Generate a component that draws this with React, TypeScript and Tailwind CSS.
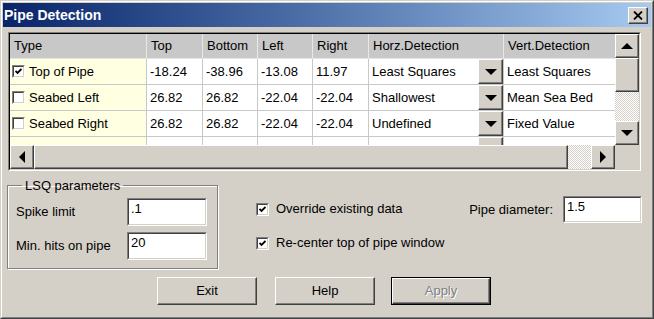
import React from 'react';

const raised =
  'border border-t-white border-l-white border-r-[#404040] border-b-[#404040] shadow-[inset_-1px_-1px_0_#808080,inset_1px_1px_0_#d4d0c8]';
const dither =
  'bg-[image:repeating-conic-gradient(#d4d0c8_0%_25%,#ffffff_0%_50%)] bg-[length:2px_2px]';

const rows = [
  { checked: true, type: 'Top of Pipe', top: '-18.24', bottom: '-38.96', left: '-13.08', right: '11.97', horz: 'Least Squares', vert: 'Least Squares' },
  { checked: false, type: 'Seabed Left', top: '26.82', bottom: '26.82', left: '-22.04', right: '-22.04', horz: 'Shallowest', vert: 'Mean Sea Bed' },
  { checked: false, type: 'Seabed Right', top: '26.82', bottom: '26.82', left: '-22.04', right: '-22.04', horz: 'Undefined', vert: 'Fixed Value' },
  { checked: false, type: '', top: '', bottom: '', left: '', right: '', horz: '', vert: '' },
];

const Arrow: React.FC<{ dir: 'up' | 'down' | 'left' | 'right' }> = ({ dir }) => {
  const pts = {
    up: '0,6 6,0 12,6',
    down: '0,0 12,0 6,6',
    left: '6,0 6,12 0,6',
    right: '0,0 0,12 6,6',
  }[dir];
  const vertical = dir === 'up' || dir === 'down';
  return (
    <svg width={vertical ? 12 : 6} height={vertical ? 6 : 12} viewBox={vertical ? '0 0 12 6' : '0 0 6 12'}>
      <polygon points={pts} fill="black" />
    </svg>
  );
};

const CheckBox: React.FC<{ checked: boolean }> = ({ checked }) => (
  <div className="w-[13px] h-[13px] shrink-0 border border-t-[#808080] border-l-[#808080] border-r-white border-b-white">
    <div className="w-full h-full bg-white border border-t-[#404040] border-l-[#404040] border-r-[#d4d0c8] border-b-[#d4d0c8] flex items-center justify-center">
      {checked && (
        <svg width="7" height="7" viewBox="0 0 7 7">
          <polyline points="0.5,3 2.5,5 6.5,1" fill="none" stroke="black" strokeWidth="1.8" />
        </svg>
      )}
    </div>
  </div>
);

const Sunken: React.FC<{ className: string; children?: React.ReactNode }> = ({ className, children }) => (
  <div className={`border border-t-[#808080] border-l-[#808080] border-r-white border-b-white ${className}`}>
    <div className="w-full h-full bg-white border border-t-[#404040] border-l-[#404040] border-r-[#d4d0c8] border-b-[#d4d0c8] px-[2px] pt-[1px] text-[13px] leading-[16px]">
      {children}
    </div>
  </div>
);

const headers = ['Type', 'Top', 'Bottom', 'Left', 'Right', 'Horz.Detection', 'Vert.Detection'];
const widths = ['w-[137px]', 'w-[56px]', 'w-[55px]', 'w-[55px]', 'w-[56px]', 'w-[135px]', 'w-[111px]'];

const Button: React.FC<{ label: string; className?: string; disabled?: boolean; def?: boolean }> = ({ label, className = '', disabled, def }) => (
  <div className={`w-[100px] h-[28px] ${def ? 'border border-black' : ''} ${className}`}>
    <div className={`w-full h-full ${raised} flex items-center justify-center text-[13px] ${disabled ? 'text-[#808080] [text-shadow:1px_1px_0_#fff]' : 'text-black'}`}>
      {label}
    </div>
  </div>
);

export default function App() {
  return (
    <div className="w-[654px] h-[319px] bg-[#d4d0c8] border border-t-[#d4d0c8] border-l-[#d4d0c8] border-r-[#404040] border-b-[#404040] font-['Liberation_Sans',Arial,sans-serif] text-black">
      <div className="w-full h-full border border-t-white border-l-white border-r-[#808080] border-b-[#808080] p-px flex flex-col">
        {/* title bar */}
        <div className="h-[24px] shrink-0 bg-gradient-to-r from-[#0a246a] to-[#a6caf0] flex items-center justify-between pl-[1px] pr-[3px]">
          <span className="text-white font-bold text-[14px] leading-none">Pipe Detection</span>
          <div className={`w-[20px] h-[17px] bg-[#d4d0c8] ${raised} flex items-center justify-center`}>
            <svg width="10" height="9" viewBox="0 0 10 9">
              <path d="M1 0.5 L9 8.5 M9 0.5 L1 8.5" stroke="black" strokeWidth="1.8" />
            </svg>
          </div>
        </div>

        {/* grid */}
        <div className="ml-[5px] mt-[5px] w-[633px] h-[139px] shrink-0 border border-t-[#808080] border-l-[#808080] border-r-white border-b-white">
          <div className="w-full h-full border border-t-black border-l-black border-r-[#d4d0c8] border-b-[#d4d0c8] flex flex-col text-[13px]">
            <div className="flex h-[111px]">
              <div className="w-[605px] overflow-hidden bg-white">
                <div className="flex h-[25px] bg-[#c8c8c8] border-b border-[#e4e4e4]">
                  {headers.map((h, i) => (
                    <div key={h} className={`${widths[i]} shrink-0 pl-[4px] flex items-center ${i < 6 ? 'border-r border-[#e8e8e8]' : ''}`}>
                      {h}
                    </div>
                  ))}
                </div>
                {rows.map((r, ri) => (
                  <div key={ri} className="flex h-[26px] border-b border-[#c8c8c8]">
                    <div className={`${widths[0]} shrink-0 bg-[#ffffe1] border-r border-[#c8c8c8] flex items-center pl-[2px] gap-[4px]`}>
                      {r.type && <CheckBox checked={r.checked} />}
                      <span>{r.type}</span>
                    </div>
                    {[r.top, r.bottom, r.left, r.right].map((v, ci) => (
                      <div key={ci} className={`${widths[ci + 1]} shrink-0 border-r border-[#c8c8c8] flex items-center pl-[3px]`}>
                        {v}
                      </div>
                    ))}
                    <div className={`${widths[5]} shrink-0 border-r border-[#c8c8c8] flex items-center`}>
                      <span className="flex-1 pl-[3px]">{r.horz}</span>
                      <div className={`w-[25px] h-full bg-[#d4d0c8] ${raised} flex items-center justify-center`}>
                        <Arrow dir="down" />
                      </div>
                    </div>
                    <div className={`${widths[6]} shrink-0 flex items-center pl-[3px]`}>{r.vert}</div>
                  </div>
                ))}
              </div>
              <div className="w-[24px] flex flex-col">
                <div className={`h-[24px] bg-[#d4d0c8] ${raised} flex items-center justify-center`}>
                  <Arrow dir="up" />
                </div>
                <div className={`h-[34px] bg-[#d4d0c8] ${raised}`} />
                <div className={`flex-1 ${dither}`} />
                <div className={`h-[24px] bg-[#d4d0c8] ${raised} flex items-center justify-center`}>
                  <Arrow dir="down" />
                </div>
              </div>
            </div>
            <div className="flex h-[24px]">
              <div className={`w-[24px] bg-[#d4d0c8] ${raised} flex items-center justify-center`}>
                <Arrow dir="left" />
              </div>
              <div className={`w-[534px] bg-[#d4d0c8] ${raised}`} />
              <div className={`flex-1 ${dither}`} />
              <div className={`w-[24px] bg-[#d4d0c8] ${raised} flex items-center justify-center`}>
                <Arrow dir="right" />
              </div>
              <div className="w-[24px] bg-[#d4d0c8]" />
            </div>
          </div>
        </div>

        {/* parameters */}
        <div className="flex items-start text-[13px]">
          <fieldset className="ml-[4px] mt-[7px] w-[211px] h-[91px] border border-[#808080] shadow-[inset_1px_1px_0_#fff,1px_1px_0_#fff] px-[8px] pb-[6px]">
            <legend className="ml-[6px] px-[3px] leading-[15px]">LSQ parameters</legend>
            <div className="flex flex-col gap-[6px] pt-[5px]">
              <div className="flex items-center">
                <span className="w-[111px]">Spike limit</span>
                <Sunken className="w-[80px] h-[28px]">.1</Sunken>
              </div>
              <div className="flex items-center">
                <span className="w-[111px]">Min. hits on pipe</span>
                <Sunken className="w-[80px] h-[28px]">20</Sunken>
              </div>
            </div>
          </fieldset>
          <div className="ml-[38px] mt-[31px] flex flex-col gap-[20px]">
            <div className="flex items-center gap-[7px] h-[14px]">
              <CheckBox checked />
              <span>Override existing data</span>
            </div>
            <div className="flex items-center gap-[7px] h-[14px]">
              <CheckBox checked />
              <span>Re-center top of pipe window</span>
            </div>
          </div>
          <div className="ml-auto mr-[9px] mt-[25px] flex items-center gap-[10px]">
            <span>Pipe diameter:</span>
            <Sunken className="w-[79px] h-[27px]">1.5</Sunken>
          </div>
        </div>

        <div className="flex mt-[8px] ml-[154px]">
          <Button label="Exit" />
          <Button label="Help" className="ml-[18px]" />
          <Button label="Apply" className="ml-[16px]" disabled def />
        </div>
      </div>
    </div>
  );
}
